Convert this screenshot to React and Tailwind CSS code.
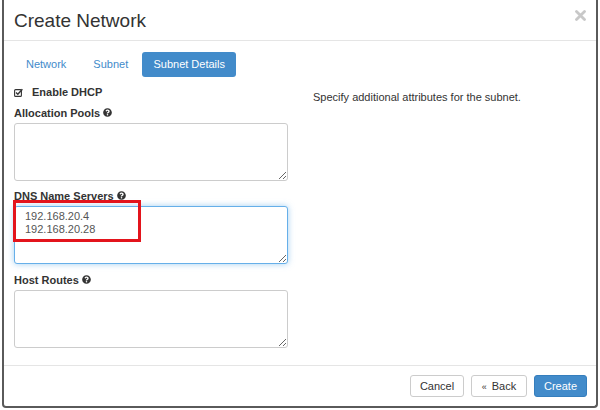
import React from "react";
import { FaQuestionCircle } from "react-icons/fa";

const font = { fontFamily: '"Liberation Sans", Arial, sans-serif' };

function HelpIcon() {
  return <FaQuestionCircle className="inline-block ml-[3px] -mt-[2px] text-[#333]" size={9} />;
}

function CheckSquare() {
  return (
    <svg width="9" height="9" viewBox="0 0 9 9" className="text-[#333]">
      <rect x="0.6" y="1.6" width="6.8" height="6.8" rx="1" fill="none" stroke="currentColor" strokeWidth="1.1" />
      <path d="M2 4.6 L3.8 6.3 L8.4 1.2" fill="none" stroke="currentColor" strokeWidth="1.4" />
    </svg>
  );
}

function Field({ label, children, className = "" }) {
  return (
    <div className={className}>
      <div className="h-[13px] text-[11px] leading-[13px] font-bold text-[#333] mb-[3px] flex items-center">
        {label}
        <HelpIcon />
      </div>
      {children}
    </div>
  );
}

const areaBase =
  "block w-[274px] h-[58px] rounded-[3px] border bg-white text-[11px] leading-[13px] text-[#555] pt-[3px] px-[10px] outline-none resize-y";

export default function App() {
  return (
    <div className="w-[600px] h-[410px] bg-white relative overflow-hidden" style={font}>
      <div className="absolute left-[2px] right-[2px] top-[-4px] h-[412px] border-x-2 border-b-2 border-[#5a5a5a] rounded-b-[4px] bg-white flex flex-col">
        {/* header */}
        <div className="h-[45px] pt-[4px] border-b border-[#e5e5e5] flex items-center justify-between pl-[10px] pr-[10px]">
          <h1 className="text-[19px] text-[#333] leading-none">Create Network</h1>
          <svg width="11" height="11" viewBox="0 0 11 11" className="mb-[9px] mr-[0px]">
            <path d="M1.5 1.5 L9.5 9.5 M9.5 1.5 L1.5 9.5" stroke="#c8c8c8" strokeWidth="2.8" strokeLinecap="round" />
          </svg>
        </div>

        {/* body */}
        <div className="flex-1 px-[10px] pt-[11px]">
          <div className="flex items-center h-[25px] text-[11px]">
            <span className="text-[#428bca] pl-[12px] pr-[12px]">Network</span>
            <span className="text-[#428bca] pl-[15px] pr-[14px]">Subnet</span>
            <span className="bg-[#428bca] text-white h-[25px] w-[94px] rounded-[3px] flex items-center justify-center">
              Subnet Details
            </span>
          </div>

          <div className="flex mt-[9px]">
            <div className="w-[274px] relative">
              <div className="h-[12px] flex items-center text-[11px] font-bold text-[#333]">
                <CheckSquare />
                <span className="ml-[9px]">Enable DHCP</span>
              </div>

              <Field label="Allocation Pools" className="mt-[9px]">
                <textarea className={`${areaBase} border-[#ccc]`} />
              </Field>

              <Field label="DNS Name Servers" className="mt-[9px]">
                <textarea
                  className={`${areaBase} border-[#66afe9] shadow-[0_0_6px_rgba(102,175,233,0.6)]`}
                  defaultValue={"192.168.20.4\n192.168.20.28"}
                />
              </Field>

              <Field label="Host Routes" className="mt-[10px]">
                <textarea className={`${areaBase} border-[#ccc]`} />
              </Field>

              {/* highlight box around the DNS entries */}
              <div className="absolute left-[-1px] top-[114px] w-[128px] h-[42px] border-[3px] border-[#e3141c]" />
            </div>

            <div className="ml-[25px] pt-[3px] text-[11px] text-[#333]">
              Specify additional attributes for the subnet.
            </div>
          </div>
        </div>

        {/* footer */}
        <div className="h-[41px] border-t border-[#e5e5e5] flex items-start justify-end gap-[7px] pt-[9px] pr-[9px]">
          <button className="h-[22px] w-[54px] rounded-[3px] border border-[#ccc] bg-white text-[11px] text-[#333]">
            Cancel
          </button>
          <button className="h-[22px] w-[56px] rounded-[3px] border border-[#ccc] bg-white text-[11px] text-[#333]">
            <span className="text-[9px] mr-[5px]">«</span>Back
          </button>
          <button className="h-[22px] w-[53px] rounded-[3px] border border-[#357ebd] bg-[#428bca] text-[11px] text-white">
            Create
          </button>
        </div>
      </div>
    </div>
  );
}
